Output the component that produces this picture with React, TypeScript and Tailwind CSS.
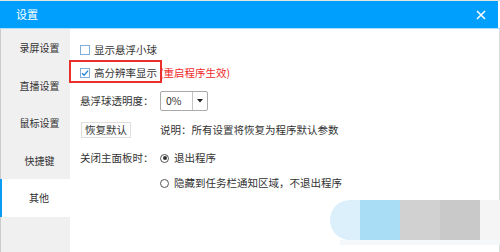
const NAV = ["录屏设置", "直播设置", "鼠标设置", "快捷键", "其他"];

function Checkbox({ checked }: { checked?: boolean }) {
  return (
    <span className="w-[10px] h-[10px] border border-[#7fb0dc] bg-white flex items-center justify-center shrink-0">
      {checked && (
        <svg width="8" height="8" viewBox="0 0 8 8">
          <path d="M1 4.2 L3.1 6.2 L7 1.6" fill="none" stroke="#2b86d6" strokeWidth="1.4" />
        </svg>
      )}
    </span>
  );
}

function Radio({ checked }: { checked?: boolean }) {
  return (
    <span className="w-[9px] h-[9px] rounded-full border border-[#555] bg-white flex items-center justify-center shrink-0">
      {checked && <span className="w-[4px] h-[4px] rounded-full bg-[#333]" />}
    </span>
  );
}

export default function App() {
  return (
    <div className="w-[500px] h-[252px] relative overflow-hidden bg-white font-['Noto_Sans_CJK_SC',sans-serif] text-[#333]">
      <div className="h-px bg-[#e4e4e4]" />
      <div className="h-[27px] bg-[#009ffd] flex items-center justify-between pl-[16px] pr-[12px] mr-[2px]">
        <span className="text-white text-[11px] leading-none">设置</span>
        <svg width="10" height="10" viewBox="0 0 10 10">
          <path d="M1 1 L9 9 M9 1 L1 9" stroke="white" strokeWidth="1.5" />
        </svg>
      </div>
      <div className="h-px bg-[#a9dcfd]" />

      <div className="flex h-[223px] border-r border-[#dcdcdc]">
        {/* sidebar */}
        <div className="w-[70px] bg-[#f0f0f0] border-l border-[#cacaca] flex flex-col">
          {NAV.map((n) => (
            <div
              key={n}
              className={
                n === "其他"
                  ? "h-[37.5px] bg-white border-l-2 border-[#0a9cf5] -ml-px flex items-center justify-center pl-[6px] text-[10px]"
                  : "h-[37.5px] flex items-center justify-center pl-[8px] text-[10px]"
              }
            >
              {n}
            </div>
          ))}
        </div>

        {/* content */}
        <div className="flex-1 flex flex-col pl-[10px] pt-[16px] text-[10.5px] leading-none">
          <div className="h-[10px] flex items-center">
            <div className="w-[80px] flex items-center gap-[4px]">
              <Checkbox />
              <span>显示悬浮小球</span>
            </div>
          </div>

          <div className="mt-[13px] h-[10px] flex items-center">
            <div className="w-[80px] flex items-center gap-[4px]">
              <Checkbox checked />
              <span className="whitespace-nowrap">高分辨率显示</span>
            </div>
            <span className="text-[#f02a2a] whitespace-nowrap">(重启程序生效)</span>
          </div>

          <div className="mt-[13px] h-[20px] flex items-center">
            <div className="w-[80px]">悬浮球透明度：</div>
            <div className="w-[48px] h-[20px] border border-[#a9a9a9] rounded-[2px] flex bg-white">
              <div className="flex-1 flex items-center pl-[5px]">0%</div>
              <div className="w-[15px] border-l border-[#c4c4c4] flex items-center justify-center">
                <svg width="6" height="4" viewBox="0 0 6 4">
                  <path d="M0 0 H6 L3 3.5 Z" fill="#222" />
                </svg>
              </div>
            </div>
          </div>

          <div className="mt-[11px] h-[16px] flex items-center">
            <div className="w-[80px] flex">
              <span className="ml-px h-[16px] w-[50px] border border-[#dedede] bg-[#fdfdfd] flex items-center justify-center">
                恢复默认
              </span>
            </div>
            <span className="whitespace-nowrap">说明：所有设置将恢复为程序默认参数</span>
          </div>

          <div className="mt-[13px] h-[14px] flex items-center">
            <div className="w-[80px]">关闭主面板时：</div>
            <div className="flex items-center gap-[5px]">
              <Radio checked />
              <span>退出程序</span>
            </div>
          </div>

          <div className="mt-[11px] h-[14px] flex items-center">
            <div className="w-[80px]" />
            <div className="flex items-center gap-[5px]">
              <Radio />
              <span className="whitespace-nowrap">隐藏到任务栏通知区域，不退出程序</span>
            </div>
          </div>
        </div>
      </div>

      {/* red annotation box */}
      <div className="absolute left-[69px] top-[60px] w-[93px] h-[23px] border-2 border-[#e8302c]" />

      {/* faded watermark */}
      <div className="absolute left-[330px] top-[200px] h-[40px] flex">
        <div className="w-[30px] h-[40px] bg-[#dbf0fb] rounded-l-[20px]" />
        <div className="w-[40px] h-[40px] bg-[#a9ddf5]" />
        <div className="w-[40px] h-[40px] bg-[#d0d1d0]" />
        <div className="w-[40px] h-[40px] bg-[#c8c9c8]" />
        <div className="w-[20px] h-[40px] bg-[#f5f5f5]" />
      </div>
      <div className="absolute left-[340px] top-[240px] w-[160px] h-[5px] bg-[#f4f8fa]" />
    </div>
  );
}
